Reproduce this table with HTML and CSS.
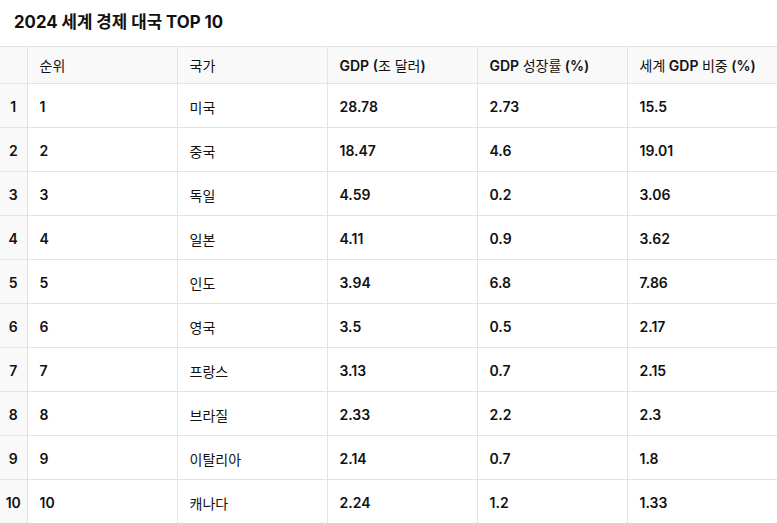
FILE: index.html
```html
<!DOCTYPE html>
<html lang="ko">
<head>
<meta charset="utf-8">
<link rel="stylesheet" href="styles.css">
</head>
<body>
<h1 class="title">2024 세계 경제 대국 TOP 10</h1>
<table class="grid">
<colgroup><col class="c-idx"><col class="c"><col class="c"><col class="c"><col class="c"><col class="c"></colgroup>
<thead>
<tr><th class="idx"></th><th><span class="ko">순위</span></th><th><span class="ko">국가</span></th><th>GDP (<span class="ko">조 달러</span>)</th><th>GDP <span class="ko">성장률</span> (%)</th><th><span class="ko">세계</span> GDP <span class="ko">비중</span> (%)</th></tr>
</thead>
<tbody>
<tr><td class="idx">1</td><td>1</td><td><span class="ko">미국</span></td><td>28.78</td><td>2.73</td><td>15.5</td></tr>
<tr><td class="idx">2</td><td>2</td><td><span class="ko">중국</span></td><td>18.47</td><td>4.6</td><td>19.01</td></tr>
<tr><td class="idx">3</td><td>3</td><td><span class="ko">독일</span></td><td>4.59</td><td>0.2</td><td>3.06</td></tr>
<tr><td class="idx">4</td><td>4</td><td><span class="ko">일본</span></td><td>4.11</td><td>0.9</td><td>3.62</td></tr>
<tr><td class="idx">5</td><td>5</td><td><span class="ko">인도</span></td><td>3.94</td><td>6.8</td><td>7.86</td></tr>
<tr><td class="idx">6</td><td>6</td><td><span class="ko">영국</span></td><td>3.5</td><td>0.5</td><td>2.17</td></tr>
<tr><td class="idx">7</td><td>7</td><td><span class="ko">프랑스</span></td><td>3.13</td><td>0.7</td><td>2.15</td></tr>
<tr><td class="idx">8</td><td>8</td><td><span class="ko">브라질</span></td><td>2.33</td><td>2.2</td><td>2.3</td></tr>
<tr><td class="idx">9</td><td>9</td><td><span class="ko">이탈리아</span></td><td>2.14</td><td>0.7</td><td>1.8</td></tr>
<tr><td class="idx">10</td><td>10</td><td><span class="ko">캐나다</span></td><td>2.24</td><td>1.2</td><td>1.33</td></tr>
</tbody>
</table>
</body>
</html>
```
FILE: styles.css
```css
html, body {
  margin: 0;
  padding: 0;
  background: #ffffff;
}
body {
  font-family: Inter, "Noto Sans CJK KR", sans-serif;
  color: #111111;
}
.title {
  margin: 0;
  height: 46px;
  box-sizing: border-box;
  padding: 11px 0 0 14px;
  font-size: 16.8px;
  line-height: 22px;
  font-weight: 700;
}
.grid {
  border-collapse: collapse;
  table-layout: fixed;
  width: 777px;
  font-size: 14px;
  font-weight: 600;
}
.c-idx { width: 27px; }
.c { width: 150px; }
.grid th, .grid td {
  border: 1px solid #e3e3e3;
  text-align: left;
  padding: 0 0 0 12px;
  white-space: nowrap;
  overflow: hidden;
}
.grid tr > :first-child { border-left: none; }
.grid tr > :last-child { border-right: none; }
.grid tbody tr:last-child td { border-bottom: none; }
.grid th {
  height: 36px;
  background: #f9f9f9;
  font-weight: 600;
}
.grid td {
  height: 41px;
  padding-top: 2px;
}
.grid .idx {
  background: #f9f9f9;
  text-align: center;
  padding: 2px 0 0 0;
}
.grid th.idx { padding: 0; }
.ko { font-weight: 400; }
```
